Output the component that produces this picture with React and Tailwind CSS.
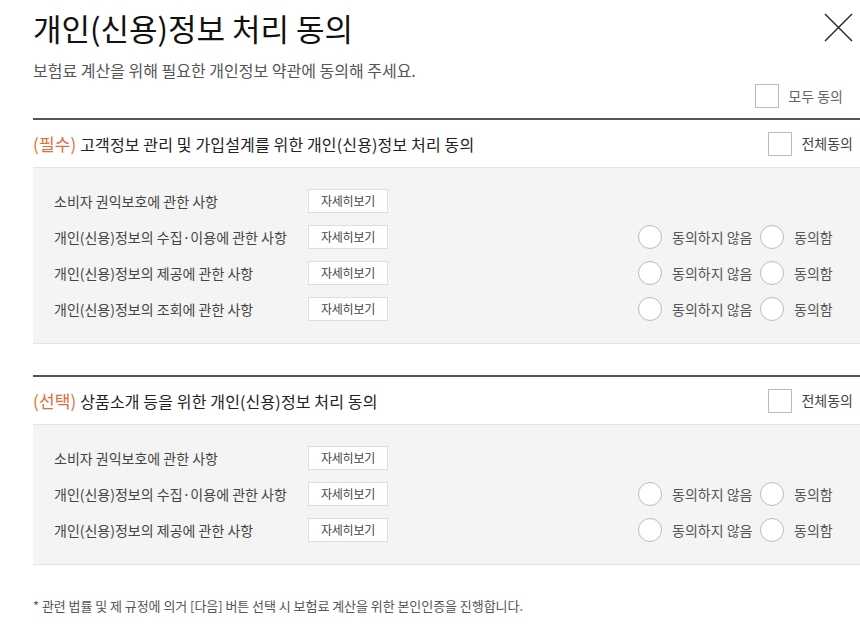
import React from "react";

const FONT = { fontFamily: '"Noto Sans CJK KR", "Noto Sans", sans-serif' };

function Box() {
  return <span className="block w-6 h-6 border border-[#bbbbbb] bg-white shrink-0" />;
}

function Radio() {
  return <span className="block w-6 h-6 rounded-full border border-[#bbbbbb] bg-white shrink-0" />;
}

function Row({ label, radios }) {
  return (
    <div className="flex items-center h-9">
      <div className="w-[254px] text-[14px] text-[#444]">{label}</div>
      <button className="w-20 h-6 border border-[#dddddd] bg-white text-[12px] tracking-[-0.2px] text-[#444] leading-none">
        자세히보기
      </button>
      {radios && (
        <div className="ml-auto flex items-center text-[14px] text-[#555]">
          <Radio />
          <span className="ml-[10px] w-[82px] whitespace-nowrap">동의하지 않음</span>
          <span className="ml-[6px]"><Radio /></span>
          <span className="ml-[10px] w-[38px] whitespace-nowrap">동의함</span>
        </div>
      )}
    </div>
  );
}

function Section({ tag, title, rows, first }) {
  return (
    <div className={first ? "mt-[10px]" : "mt-[31px]"}>
      <div className="border-t-2 border-[#555555]" />
      <div className="h-[47px] flex items-center pr-[20px]">
        <div className="text-[16px] tracking-[0.15px] text-[#222]">
          <span className="text-[17px] text-[#e06c3c]">({tag})</span> {title}
        </div>
        <div className="ml-auto flex items-center">
          <Box />
          <span className="ml-[9px] text-[14px] text-[#444]">전체동의</span>
        </div>
      </div>
      <div className="bg-[#f4f4f4] border-t border-b border-[#e3e3e3] pl-[21px] pr-[41px] pt-[15px] pb-[16px]">
        {rows.map((r, i) => (
          <Row key={i} label={r.label} radios={r.radios} />
        ))}
      </div>
    </div>
  );
}

export default function App() {
  const rows1 = [
    { label: "소비자 권익보호에 관한 사항", radios: false },
    { label: "개인(신용)정보의 수집·이용에 관한 사항", radios: true },
    { label: "개인(신용)정보의 제공에 관한 사항", radios: true },
    { label: "개인(신용)정보의 조회에 관한 사항", radios: true },
  ];
  const rows2 = [
    { label: "소비자 권익보호에 관한 사항", radios: false },
    { label: "개인(신용)정보의 수집·이용에 관한 사항", radios: true },
    { label: "개인(신용)정보의 제공에 관한 사항", radios: true },
  ];
  return (
    <div className="w-[860px] h-[642px] overflow-hidden bg-white" style={FONT}>
      <div className="w-[840px] ml-[33px]">
        <div className="flex items-start pt-[8px]">
          <h1 className="text-[31px] leading-[40px] text-[#111]">개인(신용)정보 처리 동의</h1>
          <div className="ml-auto mr-[20px] mt-[5px]">
            <svg width="29" height="29" viewBox="0 0 29 29">
              <path d="M1 1 L28 28 M28 1 L1 28" stroke="#222" strokeWidth="1.4" fill="none" />
            </svg>
          </div>
        </div>
        <p className="mt-[11px] text-[16px] leading-[22px] text-[#555]">
          보험료 계산을 위해 필요한 개인정보 약관에 동의해 주세요.
        </p>
        <div className="mt-[3px] h-6 flex items-center justify-end pr-[30px]">
          <Box />
          <span className="ml-[9px] text-[14px] text-[#666]">모두 동의</span>
        </div>
        <Section first tag="필수" title="고객정보 관리 및 가입설계를 위한 개인(신용)정보 처리 동의" rows={rows1} />
        <Section tag="선택" title="상품소개 등을 위한 개인(신용)정보 처리 동의" rows={rows2} />
        <p className="mt-[31px] text-[13px] leading-[20px] tracking-[-0.05px] text-[#555]">
          * 관련 법률 및 제 규정에 의거 [다음] 버튼 선택 시 보험료 계산을 위한 본인인증을 진행합니다.
        </p>
      </div>
    </div>
  );
}
